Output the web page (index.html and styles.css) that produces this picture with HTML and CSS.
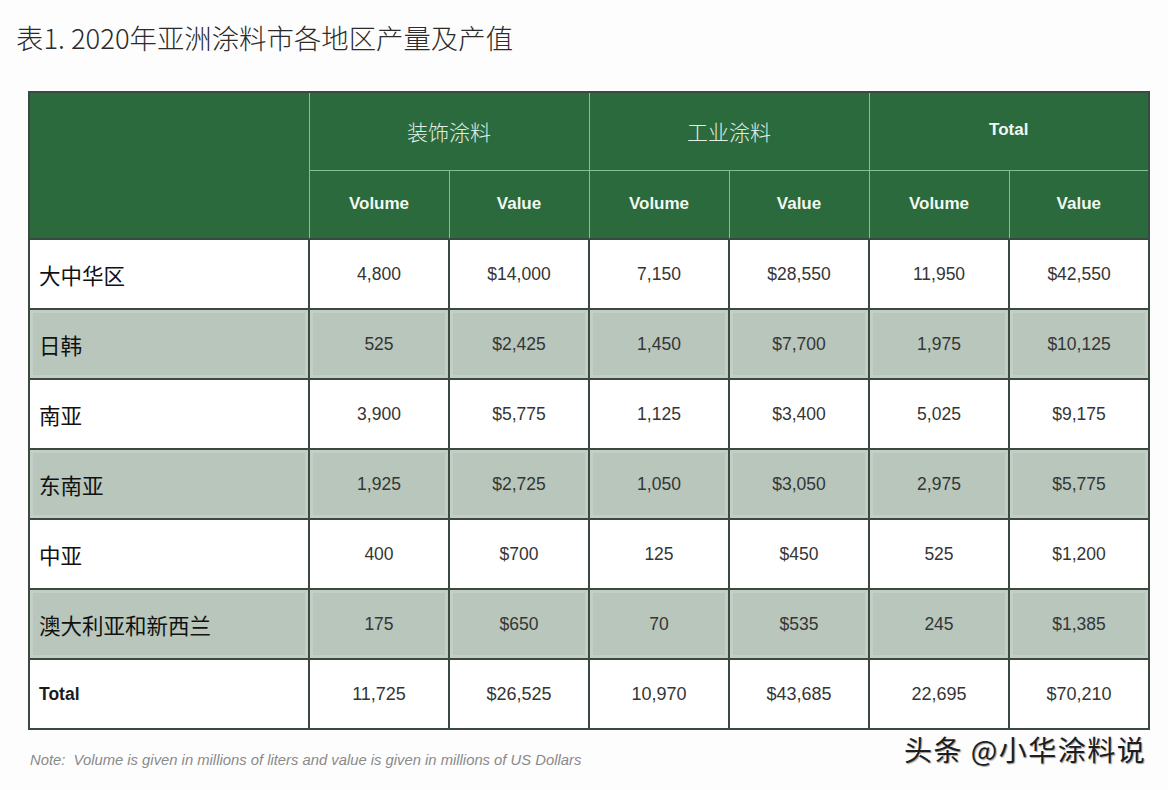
FILE: index.html
```html
<!DOCTYPE html>
<html lang="zh">
<head>
<meta charset="utf-8">
<title>表1. 2020年亚洲涂料市各地区产量及产值</title>
<link rel="stylesheet" href="styles.css">
</head>
<body>
<div class="page">
  <h1 class="title">表1. 2020年亚洲涂料市各地区产量及产值</h1>
  <table class="data">
    <colgroup>
      <col class="c-region">
      <col class="c-num"><col class="c-num"><col class="c-num">
      <col class="c-num"><col class="c-num"><col class="c-num">
    </colgroup>
    <thead>
      <tr class="h1">
        <th rowspan="2" class="corner"></th>
        <th colspan="2" class="cjk">装饰涂料</th>
        <th colspan="2" class="cjk">工业涂料</th>
        <th colspan="2" class="en">Total</th>
      </tr>
      <tr class="h2">
        <th class="en">Volume</th><th class="en">Value</th>
        <th class="en">Volume</th><th class="en">Value</th>
        <th class="en">Volume</th><th class="en">Value</th>
      </tr>
    </thead>
    <tbody>
      <tr><td class="region">大中华区</td><td>4,800</td><td>$14,000</td><td>7,150</td><td>$28,550</td><td>11,950</td><td>$42,550</td></tr>
      <tr class="alt"><td class="region">日韩</td><td>525</td><td>$2,425</td><td>1,450</td><td>$7,700</td><td>1,975</td><td>$10,125</td></tr>
      <tr><td class="region">南亚</td><td>3,900</td><td>$5,775</td><td>1,125</td><td>$3,400</td><td>5,025</td><td>$9,175</td></tr>
      <tr class="alt"><td class="region">东南亚</td><td>1,925</td><td>$2,725</td><td>1,050</td><td>$3,050</td><td>2,975</td><td>$5,775</td></tr>
      <tr><td class="region">中亚</td><td>400</td><td>$700</td><td>125</td><td>$450</td><td>525</td><td>$1,200</td></tr>
      <tr class="alt"><td class="region">澳大利亚和新西兰</td><td>175</td><td>$650</td><td>70</td><td>$535</td><td>245</td><td>$1,385</td></tr>
      <tr class="total"><td class="region en-total">Total</td><td>11,725</td><td>$26,525</td><td>10,970</td><td>$43,685</td><td>22,695</td><td>$70,210</td></tr>
    </tbody>
  </table>
  <p class="note">Note:&nbsp; Volume is given in millions of liters and value is given in millions of US Dollars</p>
  <div class="watermark">头条 @小华涂料说</div>
</div>
</body>
</html>
```
FILE: styles.css
```css
html, body {
  margin: 0;
  padding: 0;
  background: #fdfdfd;
}
.page {
  position: relative;
  width: 1168px;
  height: 790px;
  font-family: "Liberation Sans", "Noto Sans CJK SC", sans-serif;
  color: #222;
}
.title {
  margin: 0;
  padding: 19px 0 0 16px;
  height: 69px;
  box-sizing: border-box;
  font-family: "Noto Sans CJK SC", "Noto Sans", sans-serif;
  font-weight: 300;
  font-size: 27.4px;
  line-height: 36px;
  color: #2b2b2b;
}
.data {
  margin-left: 28px;
  margin-top: 22px;
  width: 1120px;
  border-collapse: collapse;
  table-layout: fixed;
  border: 2px solid #3b4a41;
}
.c-region { width: 280px; }
.c-num { width: 140px; }

.data th {
  background: #2a6a3c;
  color: #e6f1e8;
  border: 1px solid #86bd93;
  text-align: center;
  padding: 0;
}
.data .corner { border-left-color: #2a6a3c; border-top-color: #2a6a3c; }
.h1 th { height: 73px; }
.h2 th { height: 65px; border-bottom: 2px solid #3b4a41; }
.h1 th:last-child, .h2 th:last-child { border-right-color: #3b4a41; }
.h1 th { border-top-color: #2a6a3c; }
.data th.cjk {
  font-family: "Noto Sans CJK SC", sans-serif;
  font-weight: 300;
  font-size: 21px;
  color: #e3efe5;
  padding-bottom: 2px;
}
.data th.en {
  font-family: "Liberation Sans", sans-serif;
  font-weight: 700;
  font-size: 17px;
  color: #f1f7f2;
}
.h1 th.en { padding-bottom: 4px; }
.h2 th.en { padding-bottom: 2px; }

.data td {
  height: 68px;
  border: 2px solid #3b4a41;
  text-align: center;
  font-size: 17.5px;
  color: #353535;
  padding: 0;
  background: #ffffff;
}
.data tr.alt td {
  background: #b8c6bc;
  box-shadow: inset 0 0 0 3px #c3cfc6;
}
.data td.region {
  text-align: left;
  padding-left: 9px;
  font-family: "Noto Sans CJK SC", sans-serif;
  font-size: 21.5px;
  color: #111;
}
.data td.en-total {
  font-family: "Liberation Sans", sans-serif;
  font-weight: 700;
  font-size: 17.5px;
  color: #1b1b1b;
}
.data tr.total td:not(.region) {
  font-size: 18px;
}
.note {
  margin: 22px 0 0 30px;
  font-family: "Liberation Sans", sans-serif;
  font-style: italic;
  font-size: 14.8px;
  color: #8a8a8a;
}
.watermark {
  position: absolute;
  left: 904px;
  top: 732px;
  font-family: "Noto Sans CJK SC", sans-serif;
  font-size: 28px;
  letter-spacing: 1.5px;
  line-height: 34px;
  color: #1e1e1e;
  text-shadow: -1px -1px 0 #ffffff, 1px 1px 1px #9a9a9a;
  white-space: nowrap;
}
```
